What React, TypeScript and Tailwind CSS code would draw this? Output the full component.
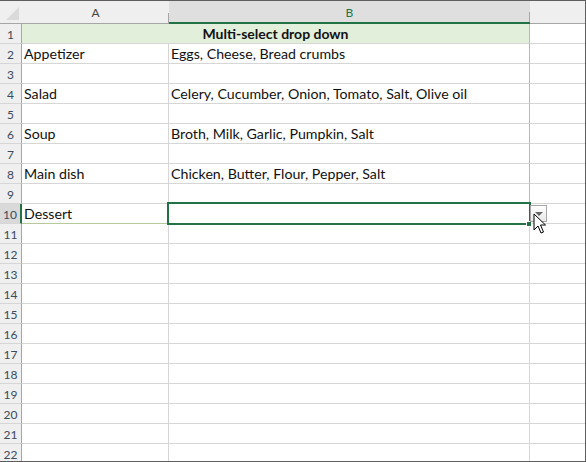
import React from "react";

const ROWS: { a?: string; b?: string }[] = [
  {},
  { a: "Appetizer", b: "Eggs, Cheese, Bread crumbs" },
  {},
  { a: "Salad", b: "Celery, Cucumber, Onion, Tomato, Salt, Olive oil" },
  {},
  { a: "Soup", b: "Broth, Milk, Garlic, Pumpkin, Salt" },
  {},
  { a: "Main dish", b: "Chicken, Butter, Flour, Pepper, Salt" },
  {},
  { a: "Dessert" },
  {}, {}, {}, {}, {}, {}, {}, {}, {}, {}, {}, {},
];

function RowHead({ n, active }: { n: number; active?: boolean }) {
  return (
    <div
      className={`w-[22px] h-full shrink-0 flex items-end justify-center pb-[2px] text-[12px] leading-none text-[#3b4a5c] border-b border-b-[#d6d6d6] ${
        active ? "bg-[#d9d9d9] border-r-2 border-r-[#217346]" : "bg-[#efefef] border-r border-r-[#a6a6a6]"
      }`}
    >
      {n}
    </div>
  );
}

export default function App() {
  return (
    <div
      className="relative w-[586px] h-[462px] overflow-hidden bg-white border-t border-r border-b border-[#5e5e5e]"
      style={{ fontFamily: "Lato, 'Liberation Sans', sans-serif" }}
    >
      {/* column headers */}
      <div className="flex h-[23px] text-[12px] text-[#444]">
        <div className="relative w-[22px] shrink-0 bg-[#efefef] border-b border-[#a6a6a6]">
          <div className="absolute right-[3px] bottom-[3px] w-0 h-0 border-l-[13px] border-l-transparent border-b-[13px] border-b-[#dadada]" />
        </div>
        <div className="relative w-[147px] shrink-0 bg-[#efefef] border-b border-[#a6a6a6] flex items-end justify-center pb-[4px] leading-none">
          A
          <div className="absolute right-0 bottom-0 h-[10px] w-px bg-[#a6a6a6]" />
        </div>
        <div className="relative w-[361px] shrink-0 bg-[#dfdfdf] border-b-2 border-[#217346] flex items-end justify-center pb-[3px] leading-none text-[#217346]">
          B
          <div className="absolute right-0 bottom-0 h-[10px] w-px bg-[#a6a6a6]" />
        </div>
        <div className="flex-1 bg-[#efefef] border-b border-[#a6a6a6]" />
      </div>

      {/* rows */}
      {ROWS.map((r, i) => {
        const n = i + 1;
        const active = n === 10;
        if (n === 1) {
          return (
            <div key={n} className="flex h-[20px]">
              <RowHead n={n} />
              <div className="w-[508px] shrink-0 bg-[#e2efda] border-b border-b-[#d6d6d6] border-r border-r-[#a9c98f] flex items-center justify-center font-bold text-[14px] text-[#111]">
                Multi-select drop down
              </div>
              <div className="flex-1 border-b border-[#d6d6d6]" />
            </div>
          );
        }
        return (
          <div key={n} className="flex h-[20px] text-[14.2px] text-[#111]">
            <RowHead n={n} active={active} />
            <div
              className={`w-[147px] shrink-0 border-r border-r-[#d6d6d6] border-b pl-[2px] leading-[20px] whitespace-nowrap ${
                active ? "border-b-[#b6c99a]" : "border-b-[#d6d6d6]"
              }`}
            >
              {r.a}
            </div>
            <div
              className={`w-[361px] shrink-0 border-b border-b-[#d6d6d6] border-r pl-[2px] leading-[20px] whitespace-nowrap ${
                n < 10 ? "border-r-[#a9c98f]" : "border-r-[#d6d6d6]"
              }`}
            >
              {r.b}
            </div>
            <div className="flex-1 border-b border-[#d6d6d6]" />
          </div>
        );
      })}

      {/* selected cell B10 */}
      <div className="absolute left-[167px] top-[201px] w-[364px] h-[23px] border-2 border-[#217346]" />
      <div className="absolute left-[526px] top-[220px] w-[6px] h-[6px] bg-[#217346] border border-white" />

      {/* dropdown button */}
      <div className="absolute left-[530px] top-[204px] w-[17px] h-[17px] border border-[#a6a6a6] bg-gradient-to-b from-white to-[#e8e8e8] flex items-center justify-center">
        <div className="w-0 h-0 border-l-[4px] border-r-[4px] border-t-[4px] border-l-transparent border-r-transparent border-t-[#666]" />
      </div>

      {/* mouse cursor */}
      <svg className="absolute left-[533px] top-[212px]" width="14" height="22" viewBox="0 0 14 22">
        <path
          d="M1 1 L1 17 L5 13 L8 20 L10.5 19 L7.5 12 L12.5 12 Z"
          fill="white"
          stroke="black"
          strokeWidth="1"
          strokeLinejoin="miter"
        />
      </svg>
    </div>
  );
}
